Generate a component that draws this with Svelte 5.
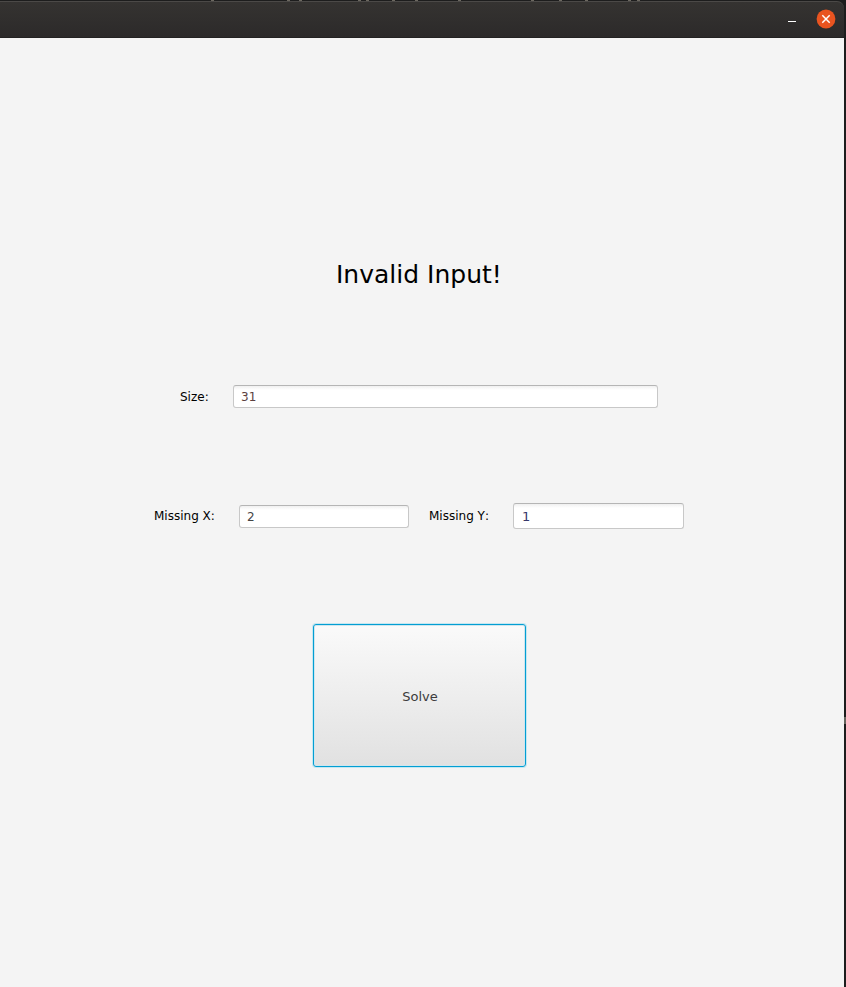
<script>
  let size = $state('31');
  let missingX = $state('2');
  let missingY = $state('1');
  const specks = [211, 287, 299, 358, 366, 392, 415, 458, 531, 559, 585, 628, 637];
</script>

<div class="desktop">
  {#each specks as x}
    <i class="speck" style="left: {x}px"></i>
  {/each}
  <i class="edge"></i>
  <div class="window">
    <header>
      <button class="min" aria-label="Minimize">
        <svg width="8" height="1"><rect width="8" height="1" fill="#fff" /></svg>
      </button>
      <button class="close" aria-label="Close">
        <svg width="20" height="20" viewBox="0 0 20 20">
          <circle cx="10" cy="10" r="9.4" fill="#e95420" />
          <path d="M6.3 6.3 13.7 13.7M13.7 6.3 6.3 13.7" stroke="#fff" stroke-width="1.5" />
        </svg>
      </button>
    </header>
    <main>
      <h1>Invalid Input!</h1>
      <div class="row size">
        <label for="size">Size:</label>
        <input id="size" bind:value={size} />
      </div>
      <div class="row missing">
        <label for="mx">Missing X:</label>
        <input id="mx" bind:value={missingX} />
        <label class="second" for="my">Missing Y:</label>
        <input id="my" bind:value={missingY} />
      </div>
      <button class="solve">Solve</button>
    </main>
  </div>
</div>

<style>
  :global(body) { margin: 0; overflow: hidden; }
  .desktop {
    position: relative;
    box-sizing: border-box;
    width: 846px;
    height: 987px;
    padding-top: 1px;
    background: #1d1d1d;
    font-family: "DejaVu Sans", sans-serif;
    overflow: hidden;
  }
  .speck { position: absolute; top: 0; width: 3px; height: 1px; background: #6c6860; }
  .edge { position: absolute; left: 844px; top: 717px; width: 2px; height: 7px; background: #65635c; }
  .window { width: 844px; height: 986px; display: flex; flex-direction: column; }
  header {
    box-sizing: border-box;
    height: 37px;
    flex: none;
    display: flex;
    justify-content: flex-end;
    align-items: center;
    padding-right: 8px;
    border-top: 1px solid #4b4947;
    border-bottom: 1px solid #232222;
    border-top-right-radius: 7px;
    background: linear-gradient(#353331, #2c2a2a);
  }
  header button { display: block; border: 0; padding: 0; background: none; }
  header svg { display: block; }
  .min { margin: 3px 20px 0 0; }
  .close { margin-top: -1px; }
  main {
    flex: 1;
    display: flex;
    flex-direction: column;
    align-items: flex-start;
    background: #f4f4f4;
  }
  h1 {
    margin: 222px 0 0 336px;
    font-size: 25px;
    font-weight: 400;
    line-height: 30px;
    white-space: nowrap;
    color: #000;
  }
  .row { display: flex; align-items: center; height: 26px; }
  label { flex: none; font-size: 12px; line-height: 16px; color: #000; white-space: nowrap; font-kerning: none; }
  input {
    box-sizing: border-box;
    flex: none;
    height: 23px;
    margin: 0;
    padding: 1px 7px 0;
    border: 1px solid #c8c8c8;
    border-top-color: #b5b5b5;
    border-radius: 3px;
    outline: 0;
    background: linear-gradient(#f0f0f0, #fff 4px);
    font: 12px "DejaVu Sans", sans-serif;
    color: #444;
  }
  .size { margin: 93px 0 0 180px; }
  .size label { width: 53px; padding-top: 2px; }
  #size { width: 425px; color: #5c4040; }
  .missing { margin: 94px 0 0 154px; }
  .missing label { width: 85px; }
  .missing .second { width: 84px; margin-left: 20px; }
  #mx { width: 170px; }
  #my { width: 171px; height: 26px; padding-left: 8px; font-size: 13px; color: #38386a; }
  .solve {
    box-sizing: border-box;
    width: 213px;
    height: 143px;
    margin: 95px 0 0 313px;
    padding: 1px 0 0 1px;
    border: 1px solid #039ed3;
    border-radius: 3px;
    background: linear-gradient(#fafafa, #e6e6e6 80%, #e1e1e1);
    box-shadow: 0 0 0 1px #c5e7f1, inset 0 0 0 1px #cfe6ee;
    font: 13px "DejaVu Sans", sans-serif;
    font-kerning: none;
    color: #3c3c3c;
  }
</style>
